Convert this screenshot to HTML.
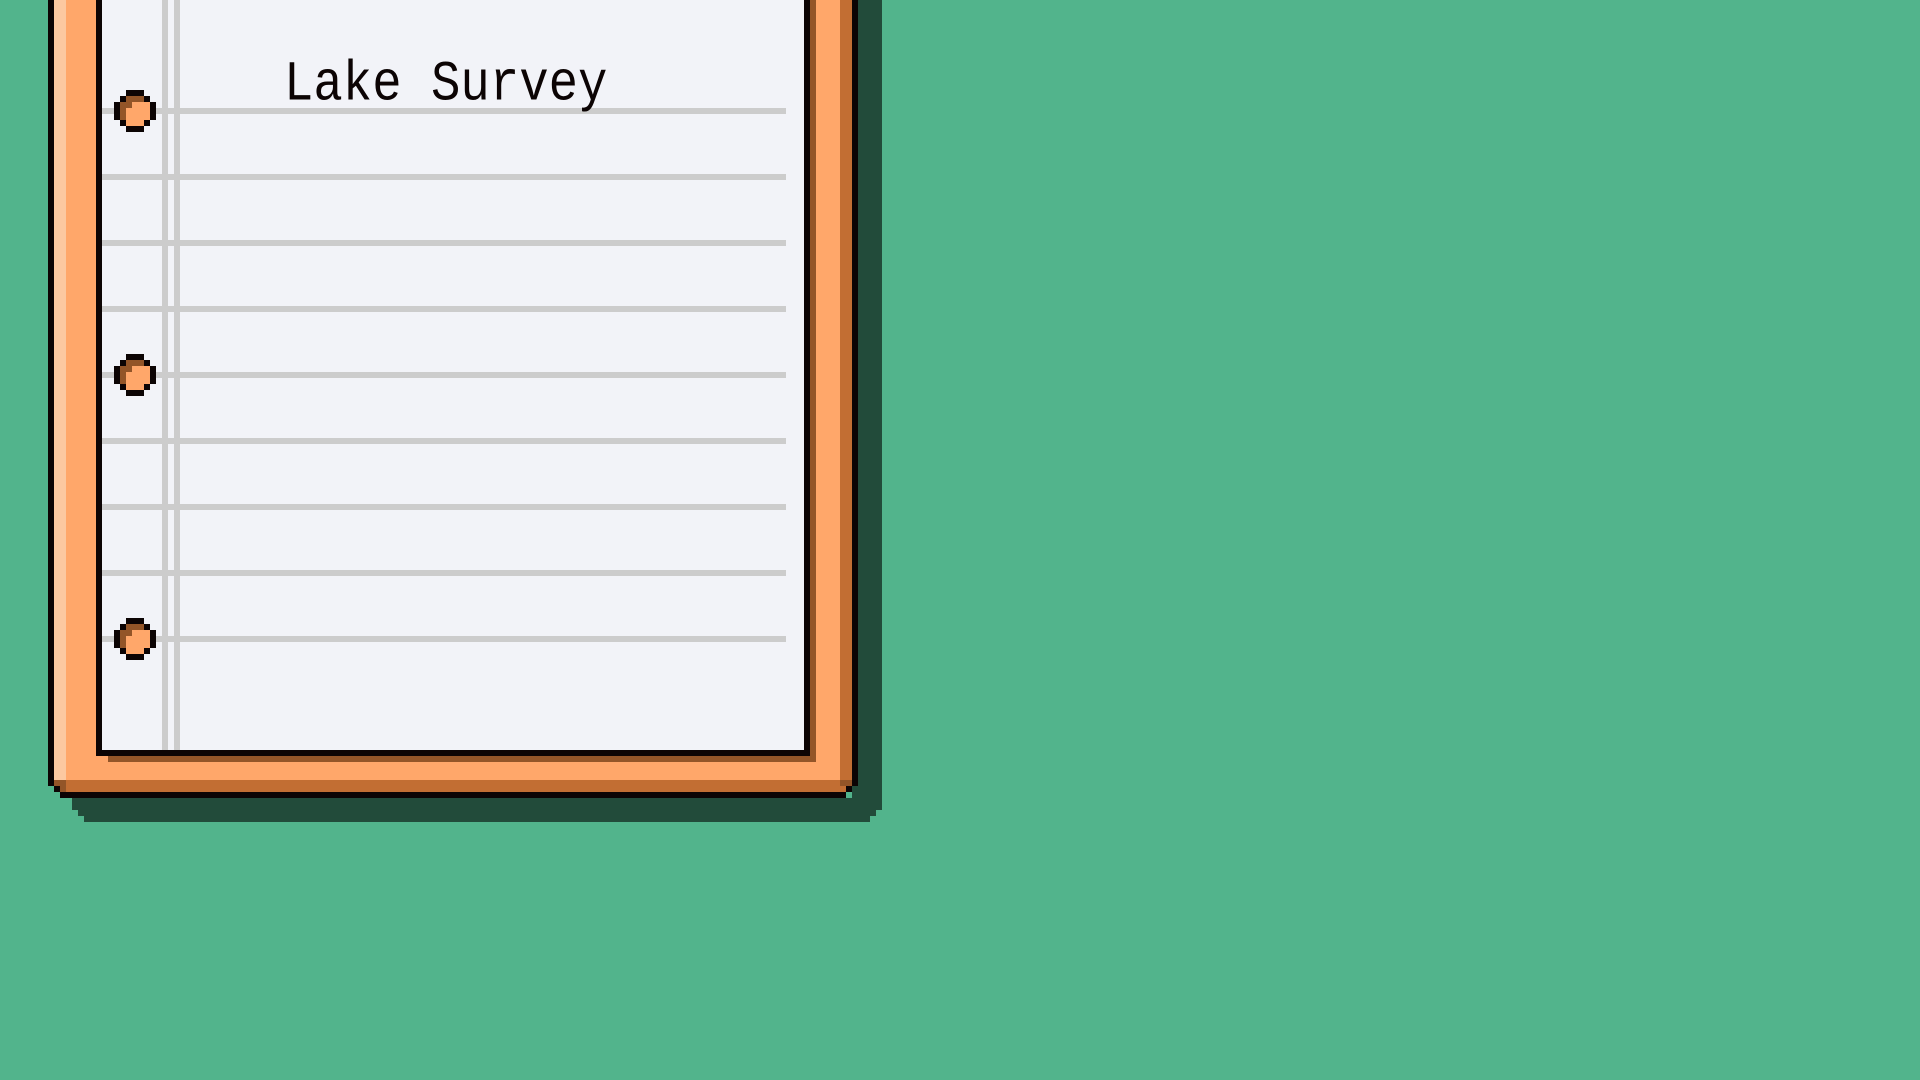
<!DOCTYPE html>
<html><head><meta charset="utf-8"><style>
html,body{margin:0;padding:0;width:1920px;height:1080px;overflow:hidden;background:#52b48c}
svg{position:absolute;left:0;top:0}
.t{position:absolute;left:284px;top:50px;font-family:"Liberation Mono",monospace;font-size:49px;line-height:60px;color:#0c0404;font-weight:normal;transform:scaleY(1.15);transform-origin:0 0;letter-spacing:0px;white-space:pre}
</style></head><body>
<svg width="1920" height="1080" shape-rendering="crispEdges">
<!-- shadow -->
<rect x="858" y="0" width="24" height="810" fill="#224b3a"/>
<rect x="858" y="810" width="18" height="6" fill="#224b3a"/>
<rect x="84" y="798" width="786" height="24" fill="#224b3a"/>
<rect x="72" y="798" width="12" height="12" fill="#224b3a"/>
<rect x="78" y="810" width="6" height="6" fill="#224b3a"/>
<rect x="852" y="786" width="6" height="24" fill="#224b3a"/>
<!-- frame outer black -->
<rect x="48" y="0" width="6" height="786" fill="#0c0404"/>
<rect x="54" y="786" width="6" height="6" fill="#0c0404"/>
<rect x="60" y="792" width="786" height="6" fill="#0c0404"/>
<rect x="846" y="786" width="6" height="6" fill="#0c0404"/>
<rect x="852" y="0" width="6" height="786" fill="#0c0404"/>
<!-- frame fill -->
<rect x="54" y="0" width="798" height="780" fill="#ffa76a"/>
<rect x="54" y="0" width="12" height="780" fill="#fcc8a0"/>
<rect x="60" y="780" width="786" height="12" fill="#c26e33"/>
<rect x="54" y="780" width="12" height="6" fill="#935528"/>
<rect x="60" y="786" width="6" height="6" fill="#935528"/>
<rect x="840" y="0" width="12" height="780" fill="#c26e33"/>
<rect x="840" y="780" width="12" height="6" fill="#935528"/>
<!-- paper shadow -->
<rect x="108" y="756" width="708" height="6" fill="#935528"/>
<rect x="810" y="0" width="6" height="762" fill="#935528"/>
<!-- paper -->
<rect x="96" y="0" width="714" height="756" fill="#0c0404"/>
<rect x="102" y="0" width="702" height="750" fill="#f2f3f8"/>
<!-- margin lines -->
<rect x="162" y="0" width="6" height="750" fill="#cccccc"/>
<rect x="174" y="0" width="6" height="750" fill="#cccccc"/>
<!-- rules -->
<g fill="#cccccc">
<rect x="102" y="108" width="684" height="6"/>
<rect x="102" y="174" width="684" height="6"/>
<rect x="102" y="240" width="684" height="6"/>
<rect x="102" y="306" width="684" height="6"/>
<rect x="102" y="372" width="684" height="6"/>
<rect x="102" y="438" width="684" height="6"/>
<rect x="102" y="504" width="684" height="6"/>
<rect x="102" y="570" width="684" height="6"/>
<rect x="102" y="636" width="684" height="6"/>
</g>
<defs>
<g id="h">
<rect x="120" y="96" width="30" height="30" fill="#ffa76a"/>
<rect x="126" y="90" width="18" height="42" fill="#ffa76a"/>
<rect x="114" y="102" width="42" height="18" fill="#ffa76a"/>
<rect x="120" y="96" width="24" height="6" fill="#935528"/>
<rect x="120" y="102" width="12" height="6" fill="#935528"/>
<rect x="120" y="108" width="6" height="12" fill="#935528"/>
<g fill="#0c0404">
<rect x="126" y="90" width="18" height="6"/>
<rect x="126" y="126" width="18" height="6"/>
<rect x="114" y="102" width="6" height="18"/>
<rect x="150" y="102" width="6" height="18"/>
<rect x="120" y="96" width="6" height="6"/>
<rect x="144" y="96" width="6" height="6"/>
<rect x="120" y="120" width="6" height="6"/>
<rect x="144" y="120" width="6" height="6"/>
</g>
</g>
</defs>
<use href="#h"/>
<use href="#h" y="264"/>
<use href="#h" y="528"/>
</svg>
<div class="t">Lake Survey</div>
</body></html>
